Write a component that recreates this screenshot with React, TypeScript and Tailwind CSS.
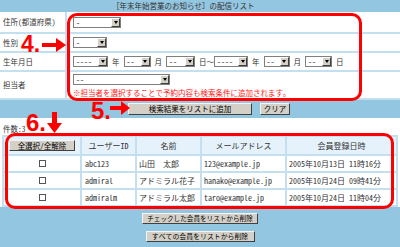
import type { ReactNode } from "react";

const members = [
  { id: "abc123", name: "山田　太郎", mail: "123@example.jp", date: "2005年10月13日 11時16分" },
  { id: "admiral", name: "アドミラル花子", mail: "hanako@example.jp", date: "2005年10月24日 09時41分" },
  { id: "admiralm", name: "アドミラル太郎", mail: "taro@example.jp", date: "2005年10月24日 11時04分" },
];

function Select({ value, className }: { value: string; className: string }) {
  return (
    <span
      className={`inline-flex h-[11px] shrink-0 border border-[#7f7f7f] bg-white ${className}`}
    >
      <span className="flex-1 pl-[2px] text-[8px] leading-[9px] text-[#333]">{value}</span>
      <span className="flex w-[9px] items-center justify-center border border-t-white border-l-white border-b-[#404040] border-r-[#404040] bg-[#d4d0c8]">
        <span className="h-0 w-0 border-x-[2.5px] border-t-[3px] border-x-transparent border-t-black" />
      </span>
    </span>
  );
}

function Btn({ children, className }: { children: ReactNode; className: string }) {
  return (
    <button
      className={`flex items-center justify-center border border-t-[#f4f4f4] border-l-[#f4f4f4] border-b-[#404040] border-r-[#404040] bg-[#d4d0c8] leading-none text-black ${className}`}
    >
      {children}
    </button>
  );
}

function Check() {
  return <span className="inline-block h-[7px] w-[7px] border border-[#555] bg-white" />;
}

export default function App() {
  return (
    <div className="relative h-[247px] w-[400px] overflow-hidden bg-[#93c6e0] font-['Noto_Sans_Mono_CJK_JP','Noto_Sans_CJK_JP',sans-serif] text-[7.5px] leading-none text-[#333]">
      {/* title band */}
      <div className="flex h-[12px] items-center pl-[112px]">［年末年始営業のお知らせ］の配信リスト</div>

      {/* search form */}
      <div className="bg-white">
        <div className="grid h-[22px] grid-cols-[67px_1fr] border-b-2 border-[#c4dff0]">
          <div className="flex items-center border-r-2 border-[#c4dff0] pl-[3px]">住所(都道府県)</div>
          <div className="flex items-center pl-[6px]">
            <Select value="-" className="w-[48px]" />
          </div>
        </div>
        <div className="grid h-[19px] grid-cols-[67px_1fr] border-b-2 border-[#c4dff0]">
          <div className="flex items-center border-r-2 border-[#c4dff0] pl-[3px]">性別</div>
          <div className="flex items-center pl-[6px]">
            <Select value="-" className="w-[34px]" />
          </div>
        </div>
        <div className="grid h-[19px] grid-cols-[67px_1fr] border-b-2 border-[#c4dff0]">
          <div className="flex items-center border-r-2 border-[#c4dff0] pl-[3px]">生年月日</div>
          <div className="flex items-center gap-[4px] pl-[6px]">
            <Select value="----" className="w-[35px]" />
            <span>年</span>
            <Select value="--" className="w-[27px]" />
            <span>月</span>
            <Select value="--" className="w-[29px]" />
            <span className="-mr-[4px]">日～</span>
            <Select value="----" className="w-[34px]" />
            <span>年</span>
            <Select value="--" className="w-[26px]" />
            <span>月</span>
            <Select value="--" className="w-[27px]" />
            <span>日</span>
          </div>
        </div>
        <div className="grid h-[28px] grid-cols-[67px_1fr] border-b-2 border-[#c4dff0]">
          <div className="flex items-center border-r-2 border-[#c4dff0] pl-[3px]">担当者</div>
          <div className="flex flex-col justify-center gap-[4px] pl-[6px]">
            <Select value="--" className="w-[97px]" />
            <span className="text-[#ff2020]">※担当者を選択することで予約内容も検索条件に追加されます。</span>
          </div>
        </div>
      </div>

      {/* search buttons */}
      <div className="flex h-[18px] items-center gap-[8px] pl-[128px]">
        <Btn className="h-[12px] w-[124px] text-[7.5px]">検索結果をリストに追加</Btn>
        <Btn className="h-[12px] w-[30px] text-[7.5px]">クリア</Btn>
      </div>

      {/* result list */}
      <div className="h-[89px] bg-white">
        <div className="h-[17px] pl-[3px] pt-[7px]">件数:3</div>
        <table className="ml-[2px] w-[394px] table-fixed border-collapse text-[8px]">
          <colgroup>
            <col className="w-[78px]" />
            <col className="w-[55px]" />
            <col className="w-[65px]" />
            <col className="w-[85px]" />
            <col className="w-[111px]" />
          </colgroup>
          <thead>
            <tr className="h-[19px] bg-[#e6f2fb]">
              <th className="border-2 border-[#c4dff0] p-0 font-normal">
                <div className="flex justify-center">
                  <Btn className="h-[11px] w-[66px] text-[7.5px]">全選択/全解除</Btn>
                </div>
              </th>
              <th className="border-2 border-[#c4dff0] font-normal">ユーザーID</th>
              <th className="border-2 border-[#c4dff0] font-normal">名前</th>
              <th className="border-2 border-[#c4dff0] font-normal">メールアドレス</th>
              <th className="border-2 border-[#c4dff0] font-normal">会員登録日時</th>
            </tr>
          </thead>
          <tbody>
            {members.map((m) => (
              <tr key={m.id} className="h-[17px]">
                <td className="border-2 border-[#c4dff0] text-center">
                  <Check />
                </td>
                <td className="border-2 border-[#c4dff0] pl-[3px]">{m.id}</td>
                <td className="border-2 border-[#c4dff0] pl-[2px]">{m.name}</td>
                <td className="border-2 border-[#c4dff0] pl-[2px]">{m.mail}</td>
                <td className="border-2 border-[#c4dff0] pl-[2px]">{m.date}</td>
              </tr>
            ))}
          </tbody>
        </table>
      </div>

      {/* delete buttons */}
      <div className="flex flex-col items-center gap-[7px] pt-[6px]">
        <Btn className="h-[11px] w-[116px] text-[6.6px]">チェックした会員をリストから削除</Btn>
        <Btn className="h-[11px] w-[109px] text-[6.9px]">すべての会員をリストから削除</Btn>
      </div>

      {/* annotations */}
      <div className="pointer-events-none absolute left-[67px] top-[13px] h-[88px] w-[295px] rounded-[10px] border-[3px] border-[#ff0000]" />
      <div className="pointer-events-none absolute left-[5px] top-[133px] h-[76px] w-[389px] rounded-[10px] border-[3px] border-[#ff0000]" />

      <span className="absolute left-[21px] top-[33px] font-['Liberation_Sans',sans-serif] text-[23px] font-bold leading-none text-[#ff0000]">4.</span>
      <svg className="absolute left-[42px] top-[38px]" width="24" height="14" viewBox="0 0 24 14">
        <polygon points="0,5 14,5 14,0 24,7 14,14 14,9 0,9" fill="#ff0000" />
      </svg>

      <span className="absolute left-[91px] top-[99px] font-['Liberation_Sans',sans-serif] text-[24px] font-bold leading-none text-[#ff0000]">5.</span>
      <svg className="absolute left-[110px] top-[101px]" width="20" height="14" viewBox="0 0 20 14">
        <polygon points="0,5 11,5 11,0 20,7 11,14 11,9 0,9" fill="#ff0000" />
      </svg>

      <span className="absolute left-[26px] top-[111px] font-['Liberation_Sans',sans-serif] text-[24px] font-bold leading-none text-[#ff0000]">6.</span>
      <svg className="absolute left-[47px] top-[112px]" width="15" height="21" viewBox="0 0 15 21">
        <polygon points="5,0 10,0 10,11 15,11 7.5,21 0,11 5,11" fill="#ff0000" />
      </svg>
    </div>
  );
}
